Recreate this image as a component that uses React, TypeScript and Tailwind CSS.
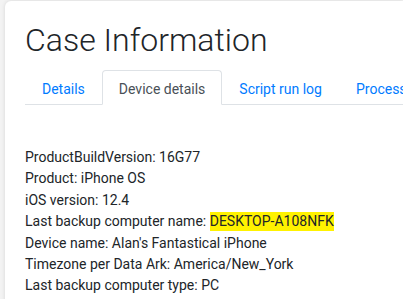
import React from "react";

const lines: React.ReactNode[] = [
  "ProductBuildVersion: 16G77",
  "Product: iPhone OS",
  "iOS version: 12.4",
  <>
    Last backup computer name:{" "}
    <span className="bg-[#fff200] pt-[1px] pb-[2px]">DESKTOP-A108NFK</span>
  </>,
  "Device name: Alan's Fantastical iPhone",
  "Timezone per Data Ark: America/New_York",
  "Last backup computer type: PC",
];

export default function App() {
  return (
    <div
      className="w-[403px] h-[299px] overflow-hidden bg-[#f3f3f3] pl-[5px] pt-[1px]"
      style={{ fontFamily: "Roboto, 'Liberation Sans', sans-serif" }}
    >
      <div className="h-[400px] bg-white rounded-tl-[6px] shadow-[0_0_4px_rgba(0,0,0,0.12)] pl-[20px] pt-[20px]">
        <h1 className="text-[32px] font-light text-[#212529] leading-[38px] m-0">
          Case Information
        </h1>
        <div className="mt-[11px] flex border-b border-[#dee2e6] h-[35px] whitespace-nowrap">
          <div className="px-[16px] pt-[8px] text-[14px] text-[#007bff] border border-transparent">
            Details
          </div>
          <div className="px-[16px] pt-[8px] text-[14px] text-[#495057] bg-white border border-[#dee2e6] border-b-white rounded-t-[4px] -mb-px">
            Device details
          </div>
          <div className="px-[16px] pt-[8px] text-[14px] text-[#007bff] border border-transparent">
            Script run log
          </div>
          <div className="px-[16px] pt-[8px] text-[14px] text-[#007bff] border border-transparent">
            Processing
          </div>
        </div>
        <div className="pt-[42px] text-[14px] leading-[21.4px] text-[#212529]">
          {lines.map((l, i) => (
            <div key={i} className="whitespace-nowrap">
              {l}
            </div>
          ))}
        </div>
      </div>
    </div>
  );
}
